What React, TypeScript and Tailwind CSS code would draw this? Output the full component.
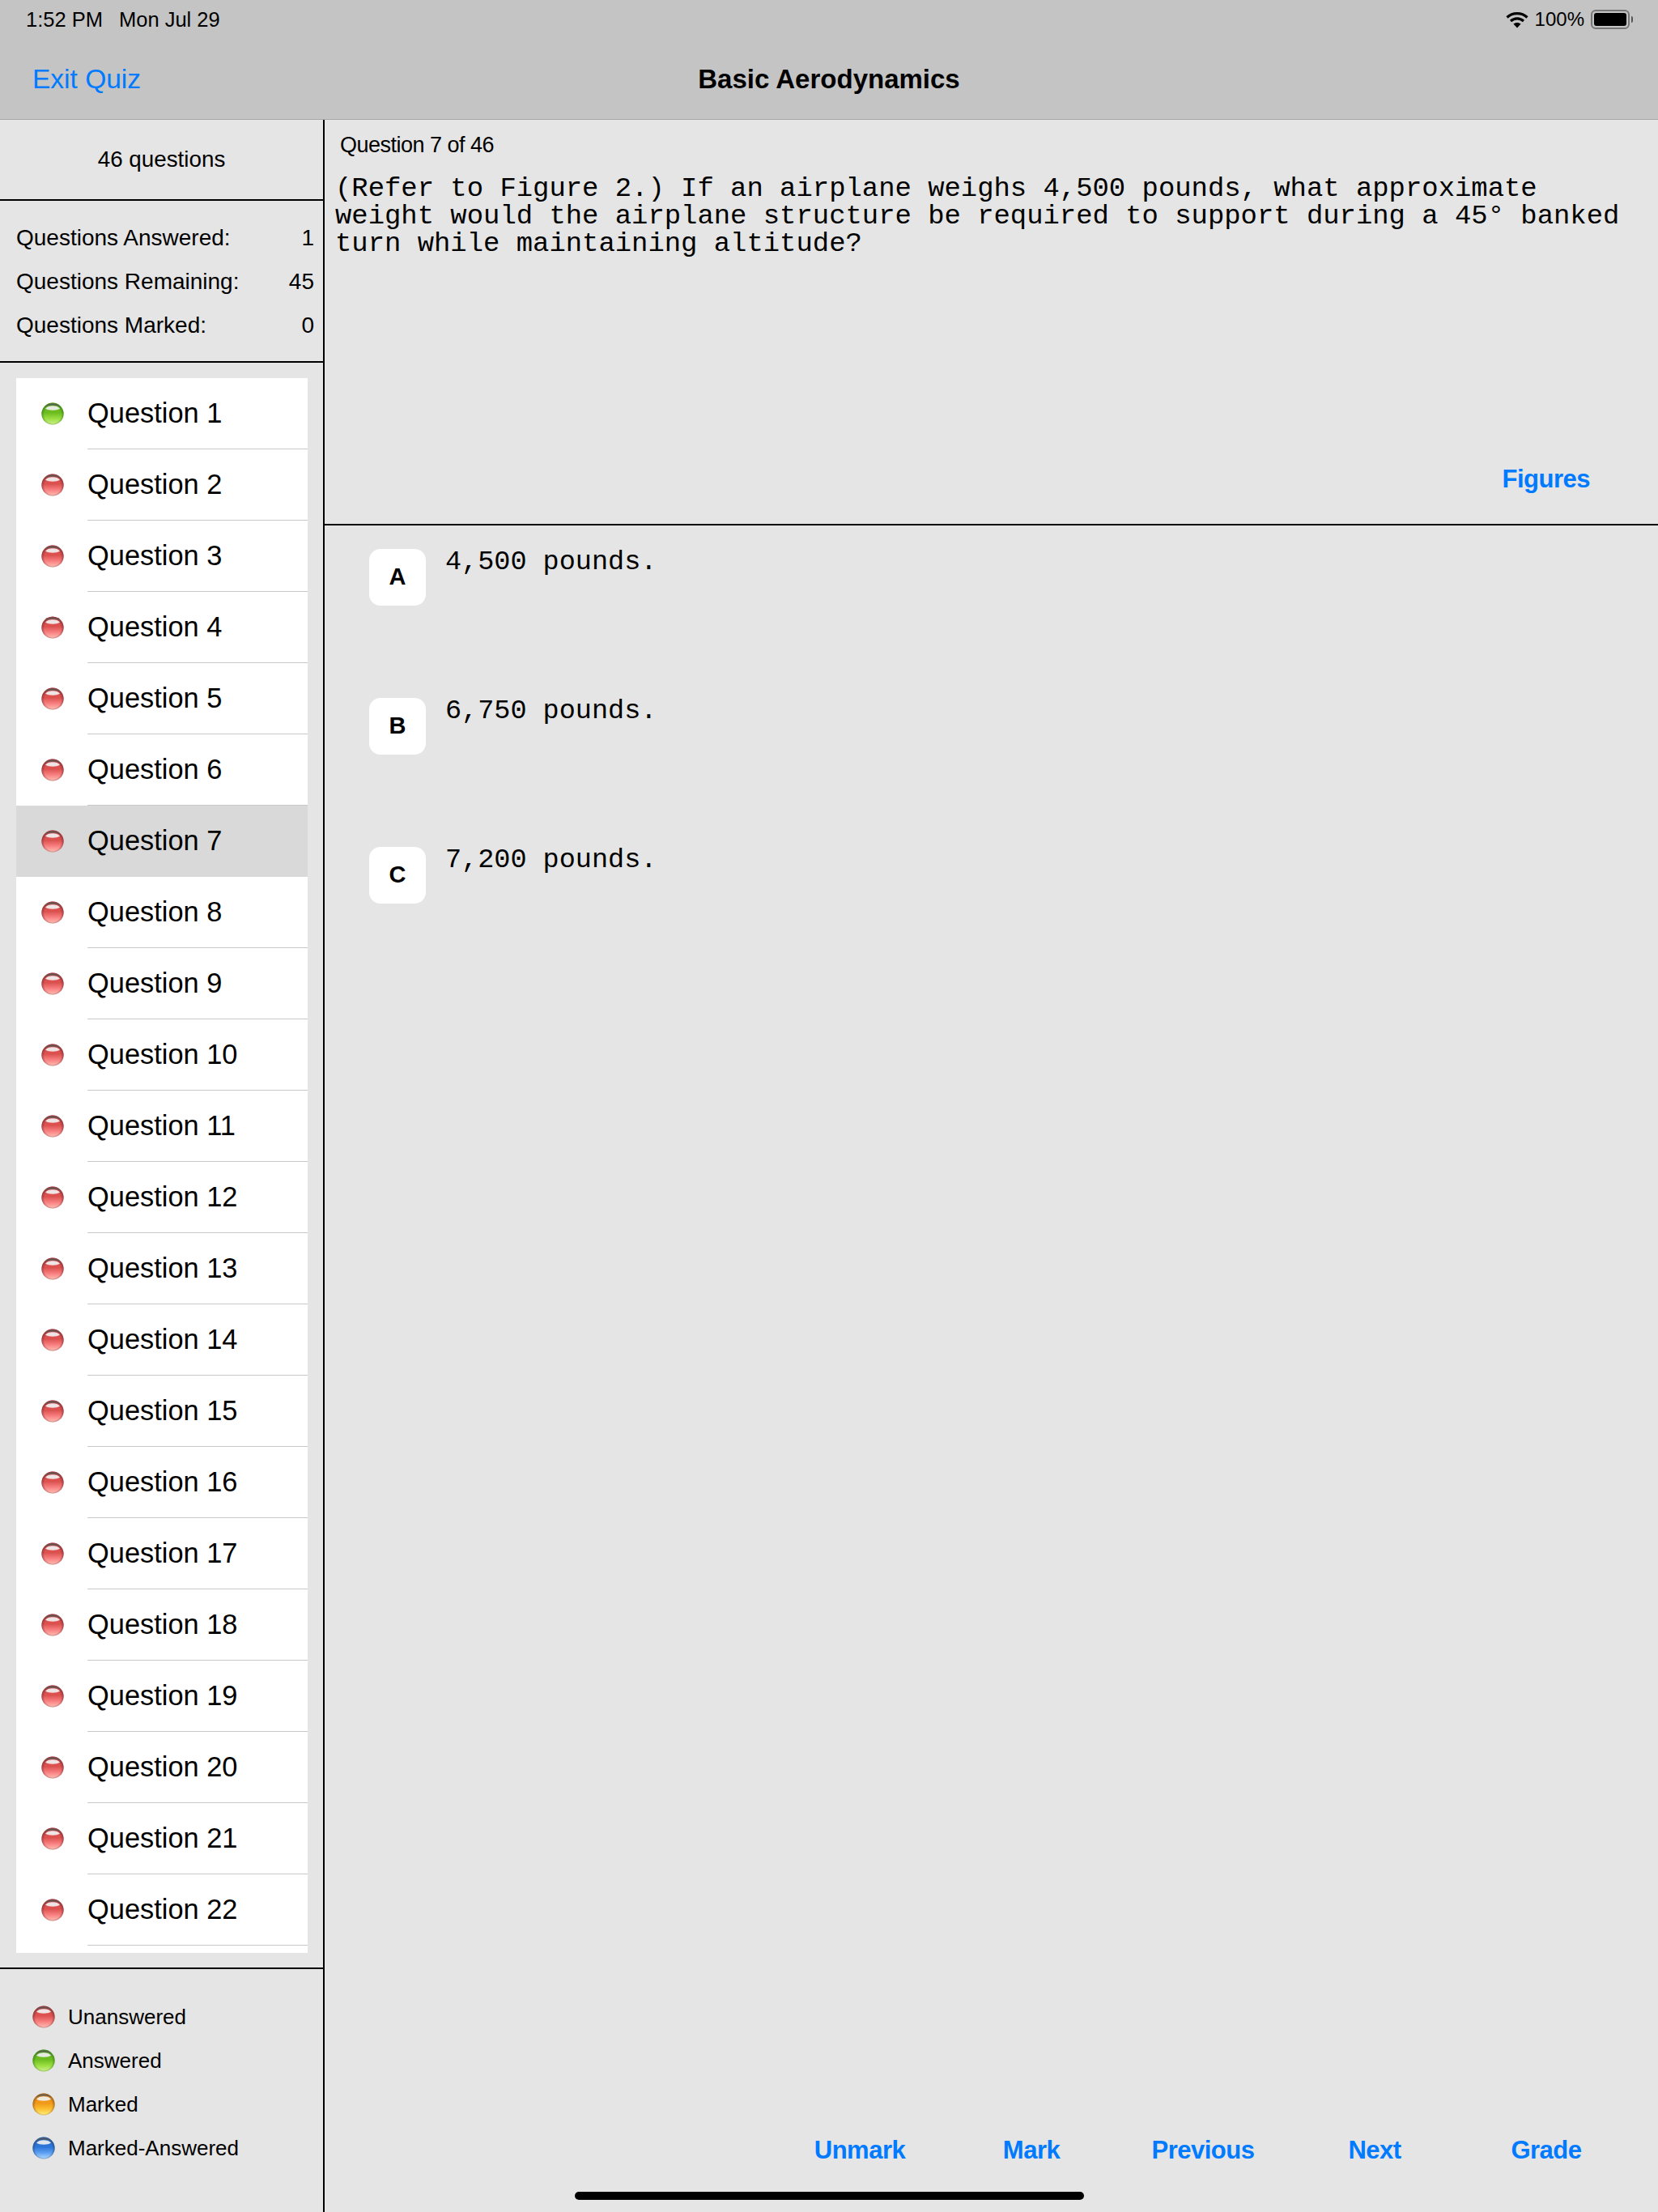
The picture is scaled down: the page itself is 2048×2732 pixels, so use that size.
const SANS = "font-['Liberation_Sans',Arial,sans-serif]";

type Tone = "red" | "green" | "orange" | "blue";

const TONES: Record<Tone, [string, string, string, string]> = {
  red: ["#7a3434", "#dc5050", "#f98080", "#ffc0b8"],
  green: ["#3a7a20", "#6cbc20", "#9ade40", "#d0f090"],
  orange: ["#8a5428", "#f09818", "#fcc030", "#fff488"],
  blue: ["#2c4c80", "#2c74d8", "#5ca0f2", "#b4dcff"],
};

function Ball({ tone }: { tone: Tone }) {
  const [rim, a, b, c] = TONES[tone];
  return (
    <svg width="28" height="28" viewBox="0 0 28 28" className="shrink-0">
      <defs>
        <linearGradient id={`body-${tone}`} x1="0" y1="0" x2="0" y2="1">
          <stop offset="0.25" stopColor={a} />
          <stop offset="0.45" stopColor={a} />
          <stop offset="0.72" stopColor={b} />
          <stop offset="1" stopColor={c} />
        </linearGradient>
        <radialGradient id={`edge-${tone}`} cx="0.5" cy="0.55" r="0.52">
          <stop offset="0.72" stopColor={rim} stopOpacity="0" />
          <stop offset="1" stopColor={rim} stopOpacity="0.75" />
        </radialGradient>
      </defs>
      <circle cx="14" cy="14" r="13.6" fill={`url(#body-${tone})`} />
      <circle cx="14" cy="14" r="13.6" fill={`url(#edge-${tone})`} />
      <path d="M5 7.8 C8 3.2 20 3.2 23 7.8 C19 10.4 9 10.4 5 7.8 Z" fill="#f0f0f0" opacity="0.92" />
      <path d="M4.5 5.6 C7.5 0 20.5 0 23.5 5.6 C20 2.8 8 2.8 4.5 5.6 Z" fill="#5a5a5a" opacity="0.8" />
    </svg>
  );
}

function StatRow({ label, value }: { label: string; value: string }) {
  return (
    <div className="flex h-[54px] items-center justify-between text-[28px] text-black">
      <span>{label}</span>
      <span>{value}</span>
    </div>
  );
}

function QuestionRow({ n }: { n: number }) {
  const selected = n === 7;
  return (
    <div className={`flex h-[88px] shrink-0 items-center ${selected ? "bg-[#d9d9d9]" : "bg-white"}`}>
      <div className="flex w-[88px] shrink-0 justify-center pl-[1px]">
        <Ball tone={n === 1 ? "green" : "red"} />
      </div>
      <div
        className={`flex h-full flex-1 items-center border-b text-[34.4px] text-black ${
          selected ? "border-[#d9d9d9]" : "border-[#c8c8c8]"
        }`}
      >
        Question {n}
      </div>
    </div>
  );
}

function LegendRow({ tone, label }: { tone: Tone; label: string }) {
  return (
    <div className="flex h-[54px] items-center gap-[16px] text-[26px] text-black">
      <Ball tone={tone} />
      <span>{label}</span>
    </div>
  );
}

function Answer({ letter, text }: { letter: string; text: string }) {
  return (
    <div className="flex h-[184px] items-start pl-[55px]">
      <div className="flex h-[70px] w-[70px] shrink-0 items-center justify-center rounded-[14px] bg-white text-[29px] font-bold text-black">
        {letter}
      </div>
      <p className="ml-[24px] -mt-[1px] font-['Liberation_Mono','Courier_New',monospace] text-[33.5px] leading-[34px] text-black">
        {text}
      </p>
    </div>
  );
}

function Wifi() {
  return (
    <svg width="28" height="21" viewBox="0 0 28 21" fill="none" stroke="#000" strokeLinecap="butt">
      <path d="M1.5 7.5 C8.5 1 19.5 1 26.5 7.5" strokeWidth="3.2" />
      <path d="M6 12 C10.8 7.8 17.2 7.8 22 12" strokeWidth="3.2" />
      <path d="M14 20.5 L9.4 15.6 C12 13.4 16 13.4 18.6 15.6 Z" fill="#000" stroke="none" />
    </svg>
  );
}

function Battery() {
  return (
    <div className="flex items-center">
      <div className="h-[24px] w-[48px] rounded-[6px] border-2 border-[#777] p-[2px]">
        <div className="h-full w-full rounded-[3px] bg-black" />
      </div>
      <div className="ml-[2px] h-[8px] w-[2px] rounded-r-full bg-[#555]" />
    </div>
  );
}

export default function App() {
  const questions = Array.from({ length: 22 }, (_, i) => i + 1);
  return (
    <div className={`relative flex h-[2732px] w-[2048px] flex-col overflow-hidden bg-[#e5e5e5] ${SANS}`}>
      <header className="relative h-[148px] shrink-0 border-b border-[#a8a8a8] bg-[#c4c4c4]">
        <div className="flex h-[48px] items-center justify-between pl-[32px] pr-[31px] text-[25.5px] text-black">
          <div className="flex gap-[20px]">
            <span>1:52 PM</span>
            <span>Mon Jul 29</span>
          </div>
          <div className="flex items-center gap-[8px] text-[24px]">
            <Wifi />
            <span>100%</span>
            <Battery />
          </div>
        </div>
        <div className="relative flex h-[100px] items-center justify-center">
          <a className="absolute left-[40px] text-[33.5px] text-[#007aff]">Exit Quiz</a>
          <h1 className="text-[33px] font-bold text-black">Basic Aerodynamics</h1>
        </div>
      </header>

      <div className="flex min-h-0 flex-1">
        <aside className="flex w-[401px] shrink-0 flex-col border-r-2 border-black">
          <div className="flex h-[100px] shrink-0 items-center justify-center border-b-2 border-black text-[27.8px] text-black">
            46 questions
          </div>
          <div className="h-[200px] shrink-0 border-b-2 border-black pl-[20px] pr-[11px] pt-[19px]">
            <StatRow label="Questions Answered:" value="1" />
            <StatRow label="Questions Remaining:" value="45" />
            <StatRow label="Questions Marked:" value="0" />
          </div>
          <div className="h-[1984px] shrink-0 border-b-2 border-black pb-[18px] pl-[20px] pr-[19px] pt-[19px]">
            <div className="flex h-full flex-col overflow-hidden bg-white">
              {questions.map((n) => (
                <QuestionRow key={n} n={n} />
              ))}
            </div>
          </div>
          <div className="flex-1 pl-[40px] pt-[32px]">
            <LegendRow tone="red" label="Unanswered" />
            <LegendRow tone="green" label="Answered" />
            <LegendRow tone="orange" label="Marked" />
            <LegendRow tone="blue" label="Marked-Answered" />
          </div>
        </aside>

        <main className="flex min-w-0 flex-1 flex-col">
          <section className="relative h-[501px] shrink-0 border-b-2 border-black">
            <div className="pl-[19px] pt-[11px] text-[27px] tracking-[-0.5px] text-black">Question 7 of 46</div>
            <p className="mt-[16px] pl-[13px] pr-[30px] font-['Liberation_Mono','Courier_New',monospace] text-[33.9px] leading-[34px] text-black">
              (Refer to Figure 2.) If an airplane weighs 4,500 pounds, what approximate weight would the airplane
              structure be required to support during a 45° banked turn while maintaining altitude?
            </p>
            <a className="absolute bottom-[32px] right-[84px] text-[31px] font-bold tracking-[-0.5px] text-[#007aff]">
              Figures
            </a>
          </section>
          <section className="flex flex-1 flex-col pt-[29px]">
            <Answer letter="A" text="4,500 pounds." />
            <Answer letter="B" text="6,750 pounds." />
            <Answer letter="C" text="7,200 pounds." />
            <div className="mt-auto flex justify-end pb-[53px] pr-[32px] text-[31px] font-bold tracking-[-0.5px] text-[#007aff]">
              {["Unmark", "Mark", "Previous", "Next", "Grade"].map((b) => (
                <a key={b} className="w-[212px] text-center">
                  {b}
                </a>
              ))}
            </div>
          </section>
        </main>
      </div>

      <div className="absolute bottom-[15px] left-[710px] h-[10px] w-[629px] rounded-full bg-black" />
    </div>
  );
}
